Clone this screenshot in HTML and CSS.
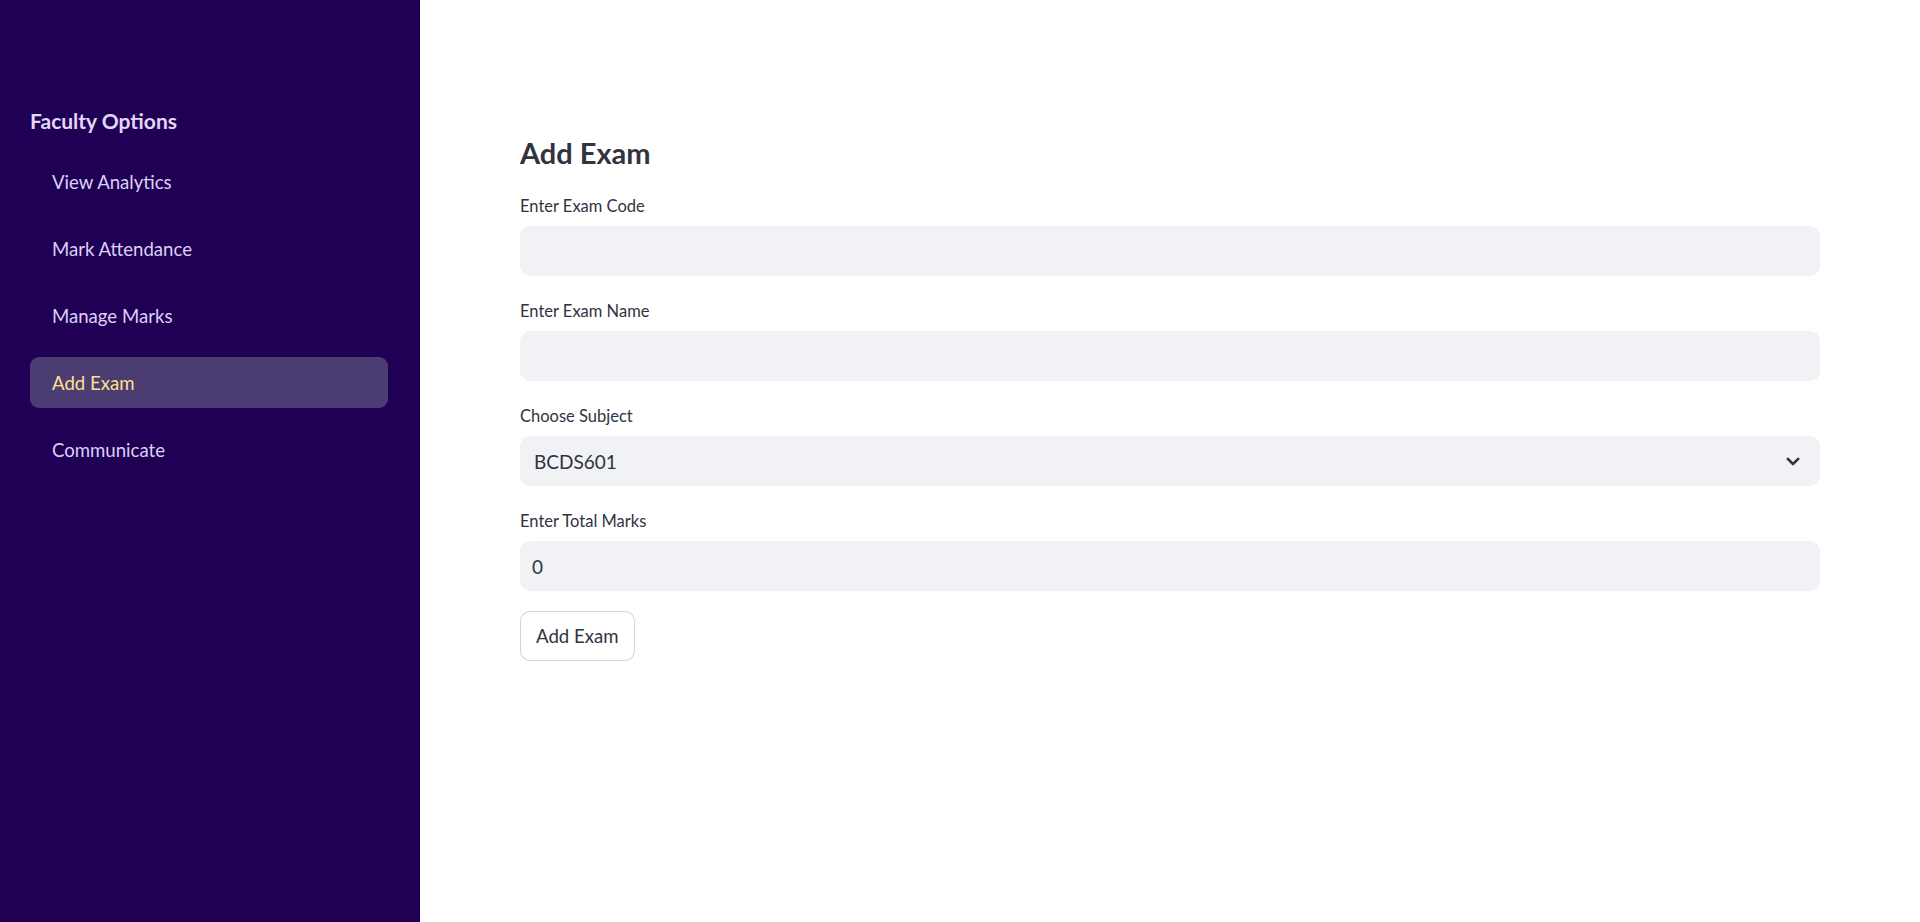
FILE: index.html
```html
<!DOCTYPE html>
<html lang="en">
<head>
<meta charset="utf-8">
<title>Add Exam</title>
<link rel="stylesheet" href="styles.css">
</head>
<body>
<div class="app">
  <aside class="sidebar">
    <div class="side-title">Faculty Options</div>
    <nav class="nav">
      <div class="nav-item">View Analytics</div>
      <div class="nav-item">Mark Attendance</div>
      <div class="nav-item">Manage Marks</div>
      <div class="nav-item active">Add Exam</div>
      <div class="nav-item">Communicate</div>
    </nav>
  </aside>
  <main class="main">
    <h3 class="title">Add Exam</h3>
    <div class="field">
      <label class="label">Enter Exam Code</label>
      <div class="input"></div>
    </div>
    <div class="field">
      <label class="label">Enter Exam Name</label>
      <div class="input"></div>
    </div>
    <div class="field">
      <label class="label">Choose Subject</label>
      <div class="input select">
        <span class="value">BCDS601</span>
        <svg class="chev" width="14" height="9" viewBox="0 0 14 9"><path d="M1.8 1.8 L7 7 L12.2 1.8" fill="none" stroke="#31333f" stroke-width="2.6" stroke-linecap="round" stroke-linejoin="round"/></svg>
      </div>
    </div>
    <div class="field">
      <label class="label">Enter Total Marks</label>
      <div class="input"><span class="value num">0</span></div>
    </div>
    <div class="actions">
      <button class="btn">Add Exam</button>
    </div>
  </main>
</div>
</body>
</html>
```

FILE: styles.css
```css
* { box-sizing: border-box; }
html, body { margin: 0; padding: 0; height: 100%; }
body {
  font-family: "Lato", "Liberation Sans", sans-serif;
  color: #31333f;
  background: #ffffff;
}
.app {
  display: flex;
  min-height: 922px;
}
.sidebar {
  width: 420px;
  flex: 0 0 420px;
  background: #200054;
  padding: 105px 32px 0 30px;
  display: flex;
  flex-direction: column;
  gap: 19px;
}
.side-title {
  font-size: 21px;
  font-weight: 700;
  color: #e2d6f8;
  line-height: 32px;
}
.nav {
  display: flex;
  flex-direction: column;
  gap: 16px;
}
.nav-item {
  height: 51px;
  display: flex;
  align-items: center;
  padding-left: 22px;
  font-size: 18.6px;
  color: #dcd0f6;
  border-radius: 9px;
}
.nav-item.active {
  background: #4b3c72;
  color: #ffe08c;
}
.main {
  flex: 1;
  padding: 135px 100px 0 100px;
  display: flex;
  flex-direction: column;
}
.title {
  margin: 0 0 20px 0;
  font-size: 29px;
  font-weight: 700;
  line-height: 36px;
  color: #31333f;
}
.field {
  display: flex;
  flex-direction: column;
  margin-bottom: 20px;
}
.label {
  height: 30px;
  margin-bottom: 5px;
  font-size: 16.5px;
  line-height: 30px;
  color: #31333f;
}
.input {
  height: 50px;
  background: #f0f2f6;
  border-radius: 10px;
  display: flex;
  align-items: center;
  padding: 0 14px;
}
.value {
  font-size: 19px;
  color: #31333f;
}
.value.num { margin-left: -2px; }
.select { justify-content: space-between; padding-right: 20px; }
.actions { display: flex; }
.btn {
  font-family: inherit;
  font-size: 18.6px;
  color: #31333f;
  background: #ffffff;
  border: 1px solid rgba(49, 51, 63, 0.2);
  border-radius: 10px;
  height: 50px;
  padding: 0 15px;
  cursor: pointer;
}
```
